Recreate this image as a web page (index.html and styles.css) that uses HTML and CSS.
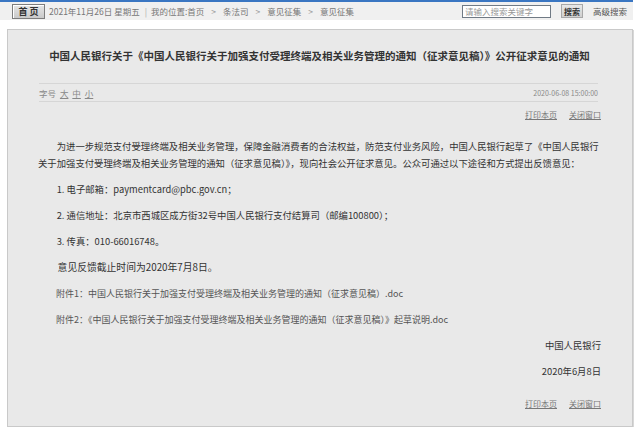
FILE: index.html
```html
<!DOCTYPE html>
<html lang="zh-CN">
<head>
    <meta charset="UTF-8" />
    <meta name="viewport" content="width=device-width, initial-scale=1" />
    <title>中国人民银行关于《中国人民银行关于加强支付受理终端及相关业务管理的通知（征求意见稿）》公开征求意见的通知</title>
    <link rel="stylesheet" href="styles.css">
</head>
<body>
    <div class="pagina">
        <div class="faixa"></div>
        <div class="barra">
            <span class="botao-home">首 页</span>
            <span class="caminho">2021年11月26日 星期五<i class="sep">|</i>我的位置:首页<i>&gt;</i>条法司<i>&gt;</i>意见征集<i>&gt;</i>意见征集</span>
            <input type="text" class="busca" placeholder="请输入搜索关键字" />
            <button type="button" class="botao-busca">搜索</button>
            <a class="avancada">高级搜索</a>
        </div>

        <div class="artigo">
            <h1>中国人民银行关于《中国人民银行关于加强支付受理终端及相关业务管理的通知（征求意见稿）》公开征求意见的通知</h1>
            <div class="meta">
                <span class="fonte">字号 <a>大</a> <a>中</a> <a>小</a></span>
                <span class="data">2020-06-08 15:00:00</span>
            </div>
            <div class="acoes"><a>打印本页</a><a>关闭窗口</a></div>

            <div class="texto">
                <p>为进一步规范支付受理终端及相关业务管理，保障金融消费者的合法权益，防范支付业务风险，中国人民银行起草了《中国人民银行关于加强支付受理终端及相关业务管理的通知（征求意见稿）》，现向社会公开征求意见。公众可通过以下途径和方式提出反馈意见：</p>
                <p>1. 电子邮箱：paymentcard@pbc.gov.cn；</p>
                <p>2. 通信地址：北京市西城区成方街32号中国人民银行支付结算司（邮编100800）；</p>
                <p>3. 传真：010-66016748。</p>
                <p class="prazo">意见反馈截止时间为2020年7月8日。</p>
                <p class="anexo">附件1：中国人民银行关于加强支付受理终端及相关业务管理的通知（征求意见稿）.doc</p>
                <p class="anexo">附件2：《中国人民银行关于加强支付受理终端及相关业务管理的通知（征求意见稿）》起草说明.doc</p>
                <p class="assinatura">中国人民银行</p>
                <p class="assinatura">2020年6月8日</p>
            </div>

            <div class="acoes rodape"><a>打印本页</a><a>关闭窗口</a></div>
        </div>
    </div>
</body>
</html>
```

FILE: styles.css
```css
body{
    margin: 0;
    background: #fff;
    font-family: "Noto Sans CJK SC", "Liberation Sans", sans-serif;
    color: #333;
}
.pagina{
    width: 633px;
}
.faixa{
    height: 2px;
    background: #3a76c2;
}
.barra{
    display: flex;
    align-items: center;
    height: 18px;
    background: #f0f0f0;
    font-size: 8.5px;
    color: #777;
    padding-right: 6px;
}
.botao-home{
    margin-left: 12px;
    width: 31px;
    height: 13px;
    line-height: 13px;
    text-align: center;
    font-weight: bold;
    font-size: 9px;
    color: #333;
    background: linear-gradient(#e6e6e6, #c9c9c9);
    border: 1px solid #7d7d7d;
    box-shadow: inset 1px 1px 0 #fff;
}
.caminho{
    margin-left: 4px;
    white-space: nowrap;
}
.caminho i{
    font-style: normal;
    margin: 0 7px;
    color: #999;
}
.caminho i.sep{
    margin: 0 4px 0 5px;
    color: #aaa;
}
.busca{
    margin-left: auto;
    width: 89px;
    height: 13px;
    box-sizing: border-box;
    padding: 0 2px;
    border: 1px solid #707a85;
    background: #fff;
    font-family: inherit;
    font-size: 8.5px;
}
.busca::placeholder{
    color: #999;
}
.botao-busca{
    margin-left: 10px;
    width: 22px;
    height: 14px;
    padding: 0;
    border: 1px solid #a8a8a8;
    background: linear-gradient(#e8e8e8, #cfcfcf);
    font-family: inherit;
    font-size: 8px;
    font-weight: bold;
    color: #333;
}
.avancada{
    margin-left: 10px;
    color: #555;
}

.artigo{
    margin: 9px 0 0 7px;
    background: #e9e9e9;
    border: 1px solid #c9c9c9;
    box-shadow: 1px 1px 0 #d8d8d8;
    padding: 19px 31px 15px 30px;
}
h1{
    margin: 0;
    font-size: 10.5px;
    line-height: 14px;
    text-align: center;
    color: #333;
}
.meta{
    display: flex;
    justify-content: space-between;
    align-items: center;
    margin: 20px 3px 0 1px;
    height: 17px;
    border-top: 1px solid #d6d6d6;
    border-bottom: 1px solid #d6d6d6;
}
.fonte{
    font-size: 8.5px;
    color: #888;
}
.fonte a{
    text-decoration: underline;
    margin-left: 2px;
}
.data{
    font-size: 7px;
    color: #888;
}
.acoes{
    display: flex;
    justify-content: flex-end;
    gap: 12px;
    margin-top: 6px;
    font-size: 8px;
    line-height: 14px;
}
.acoes a{
    color: #777;
    text-decoration: underline;
}
.texto{
    margin-top: 16px;
    font-size: 9.35px;
    color: #333;
}
.texto p{
    margin: 0 0 9px;
    line-height: 17px;
    text-indent: 2em;
}
.texto .prazo{
    font-size: 9.8px;
}
.texto .anexo{
    font-size: 9px;
    color: #555;
}
.texto .assinatura{
    text-align: right;
    text-indent: 0;
}
.rodape{
    margin-top: 17px;
}
```
